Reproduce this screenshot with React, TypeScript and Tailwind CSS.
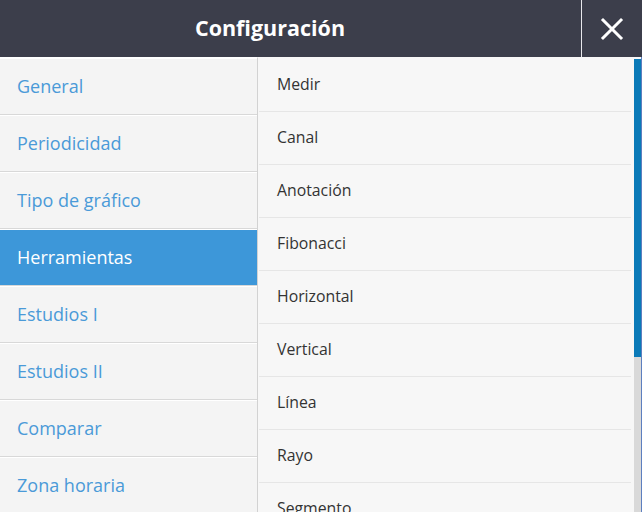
import React from 'react';

const sections = [
  'General',
  'Periodicidad',
  'Tipo de gráfico',
  'Herramientas',
  'Estudios I',
  'Estudios II',
  'Comparar',
  'Zona horaria',
];

const tools = ['Medir', 'Canal', 'Anotación', 'Fibonacci', 'Horizontal', 'Vertical', 'Línea', 'Rayo', 'Segmento'];

const App: React.FC = () => {
  const active = 'Herramientas';

  return (
    <div
      className="w-[642px] h-[512px] overflow-hidden flex flex-col bg-[#f4f4f4]"
      style={{ fontFamily: '"Open Sans", "Noto Sans", sans-serif' }}
    >
      <header className="h-[57px] shrink-0 flex bg-[#3c3e4b] text-white">
        <div className="flex-1 flex items-center justify-center pr-[41px]">
          <h1 className="text-[21.5px] font-bold">Configuración</h1>
        </div>
        <button className="w-[61px] border-l border-[#e8e8ec] flex items-center justify-center">
          <svg width="24" height="24" viewBox="0 0 24 24" fill="none" stroke="white" strokeWidth="3" strokeLinecap="square">
            <path d="M3 3 L21 21 M21 3 L3 21" />
          </svg>
        </button>
      </header>

      <div className="flex-1 flex min-h-0">
        <nav className="w-[258px] shrink-0 bg-[#f4f4f4] border-r border-[#d2d2d2] border-t border-t-white">
          {sections.map((s) => (
            <div
              key={s}
              className={`h-[57px] flex items-center pl-[17px] text-[18px] border-t border-t-white border-b border-b-[#d8d8d8] ${
                s === active ? 'bg-[#3d97d9] text-white' : 'text-[#4a9ad8]'
              }`}
            >
              {s}
            </div>
          ))}
        </nav>

        <div className="flex-1 flex bg-[#f7f7f7]">
          <ul className="flex-1 pt-[2px] pl-[1px] pr-[3px]">
            {tools.map((t) => (
              <li
                key={t}
                className="h-[53px] flex items-center pl-[18px] text-[15.8px] text-[#333] border-b border-[#e6e6e6]"
              >
                {t}
              </li>
            ))}
          </ul>
          <div className="w-[8px] flex flex-col bg-[#d9d9d9] border-r border-[#5d7fbf]">
            <div className="h-[2px] bg-[#f7f7f7]" />
            <div className="h-[298px] bg-[#0b7ab8]" />
          </div>
        </div>
      </div>
    </div>
  );
};

export default App;
